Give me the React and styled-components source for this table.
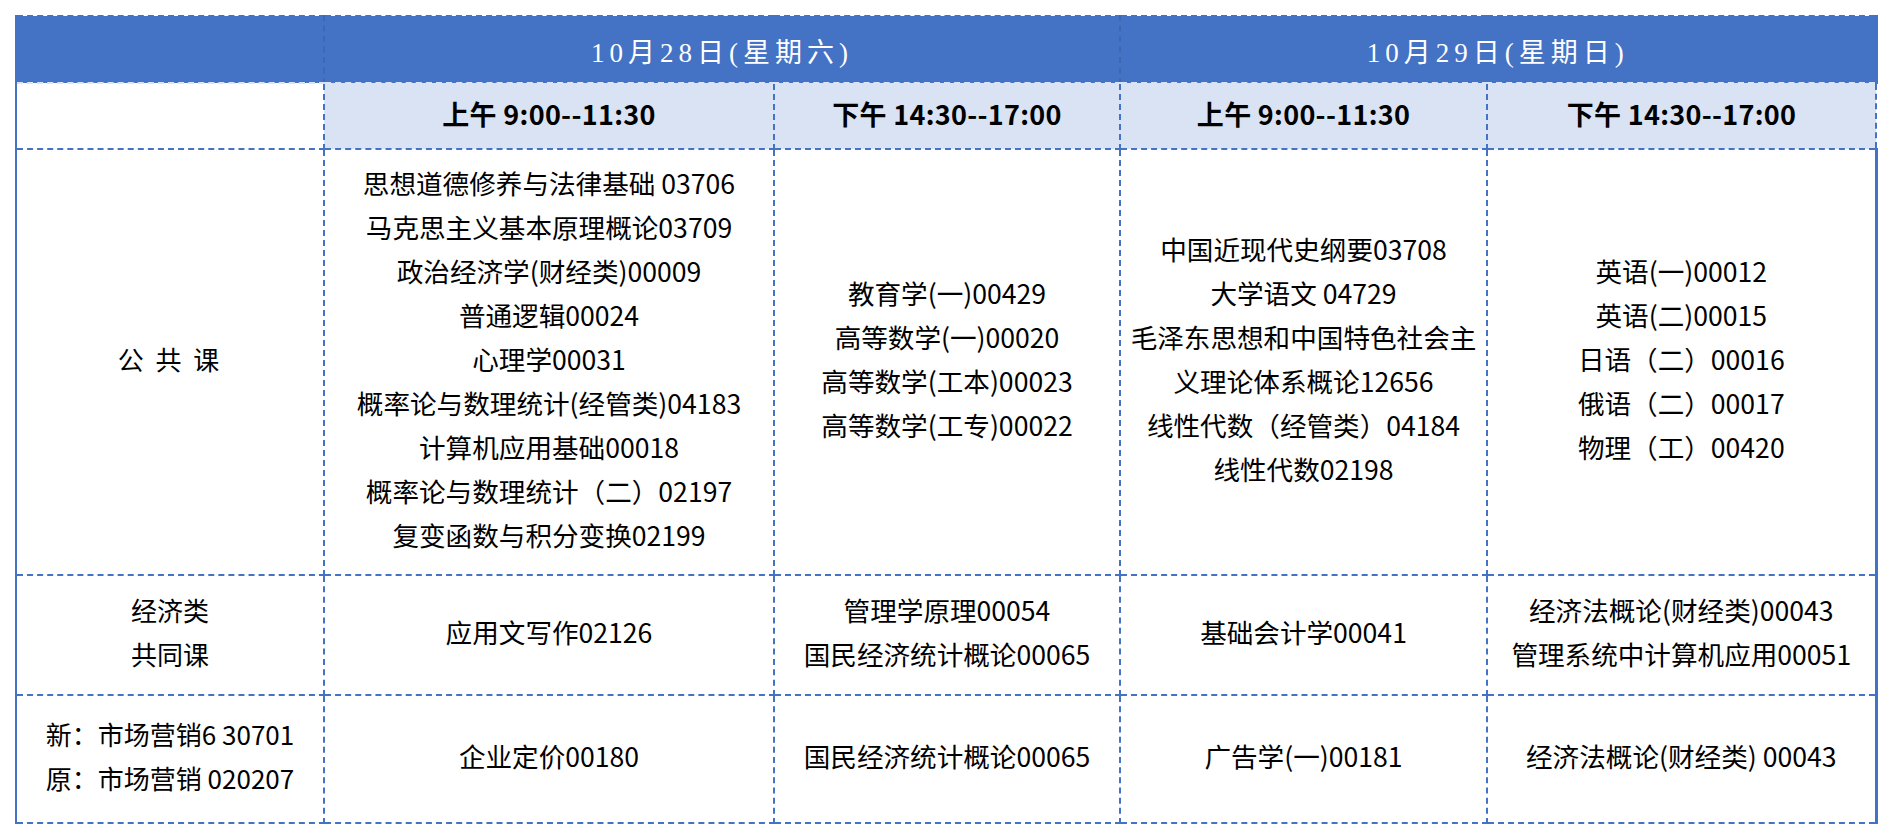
import React from "react";
import styled, { createGlobalStyle } from "styled-components";

const GlobalStyle = createGlobalStyle`
  body {
    margin: 0;
    background: #ffffff;
    font-family: "Noto Sans CJK SC", "Noto Sans", sans-serif;
  }
`;

const blue = "#4472c4";
const light = "#dae3f3";
const line = "2px dashed #4472c4";

const columns = [308, 450, 346, 367, 389];

const sessions = [
  "上午 9:00--11:30",
  "下午 14:30--17:00",
  "上午 9:00--11:30",
  "下午 14:30--17:00",
];

const rows = [
  {
    label: ["公 共 课"],
    spaced: true,
    height: 426,
    cells: [
      [
        "思想道德修养与法律基础 03706",
        "马克思主义基本原理概论03709",
        "政治经济学(财经类)00009",
        "普通逻辑00024",
        "心理学00031",
        "概率论与数理统计(经管类)04183",
        "计算机应用基础00018",
        "概率论与数理统计（二）02197",
        "复变函数与积分变换02199",
      ],
      ["教育学(一)00429", "高等数学(一)00020", "高等数学(工本)00023", "高等数学(工专)00022"],
      [
        "中国近现代史纲要03708",
        "大学语文 04729",
        "毛泽东思想和中国特色社会主",
        "义理论体系概论12656",
        "线性代数（经管类）04184",
        "线性代数02198",
      ],
      ["英语(一)00012", "英语(二)00015", "日语（二）00016", "俄语（二）00017", "物理（工）00420"],
    ],
  },
  {
    label: ["经济类", "共同课"],
    height: 120,
    cells: [
      ["应用文写作02126"],
      ["管理学原理00054", "国民经济统计概论00065"],
      ["基础会计学00041"],
      ["经济法概论(财经类)00043", "管理系统中计算机应用00051"],
    ],
  },
  {
    label: ["新：市场营销6 30701", "原：市场营销 020207"],
    height: 128,
    cells: [
      ["企业定价00180"],
      ["国民经济统计概论00065"],
      ["广告学(一)00181"],
      ["经济法概论(财经类) 00043"],
    ],
  },
];

export default function App() {
  return (
    <>
      <GlobalStyle />
      <Page>
        <Schedule>
          <colgroup>
            {columns.map((w, i) => (
              <col key={i} style={{ width: w }} />
            ))}
          </colgroup>
          <thead>
            <DateRow>
              <DateCell />
              <DateCell colSpan={2}>10月28日(星期六)</DateCell>
              <DateCell colSpan={2} $end>
                10月29日(星期日)
              </DateCell>
            </DateRow>
            <SessionRow>
              <SessionCell $blank />
              {sessions.map((s, i) => (
                <SessionCell key={i} $end={i === sessions.length - 1}>
                  {s}
                </SessionCell>
              ))}
            </SessionRow>
          </thead>
          <tbody>
            {rows.map((row, r) => (
              <BodyRow key={r} $height={row.height}>
                <LabelCell $spaced={row.spaced}>
                  {row.label.map((t) => (
                    <Line key={t}>{t}</Line>
                  ))}
                </LabelCell>
                {row.cells.map((lines, c) => (
                  <Cell key={c} $end={c === row.cells.length - 1}>
                    {lines.map((t) => (
                      <Line key={t}>{t}</Line>
                    ))}
                  </Cell>
                ))}
              </BodyRow>
            ))}
          </tbody>
        </Schedule>
      </Page>
    </>
  );
}

const Page = styled.div`
  padding: 15px 0 0 15px;
`;

const Schedule = styled.table`
  table-layout: fixed;
  border-collapse: collapse;
  width: 1860px;
`;

const DateRow = styled.tr`
  height: 67px;
`;

const DateCell = styled.th`
  background: ${blue};
  color: #ffffff;
  font-family: "Liberation Serif", "Noto Sans CJK SC", serif;
  font-weight: 400;
  font-size: 27px;
  letter-spacing: 5px;
  text-align: center;
  vertical-align: middle;
  padding: 2px 0 0;
  border-top: ${line};
  border-left: 2px dashed #3d66b3;
  border-right: ${(p) => (p.$end ? `3px solid ${blue}` : "2px dashed #3d66b3")};
  border-bottom: 2px dashed #dae3f3;

  &:first-child {
    border-left: 2px solid ${blue};
  }
`;

const SessionRow = styled.tr`
  height: 66px;
`;

const SessionCell = styled.th`
  background: ${(p) => (p.$blank ? "#ffffff" : light)};
  color: #000000;
  font-size: 27px;
  font-weight: 700;
  letter-spacing: 0.3px;
  text-align: center;
  vertical-align: middle;
  padding: 0 0 6px;
  border-left: ${(p) => (p.$blank ? `2px solid ${blue}` : line)};
  border-right: ${line};
  border-bottom: ${line};
`;

const BodyRow = styled.tr`
  height: ${(p) => p.$height}px;
`;

const Cell = styled.td`
  text-align: center;
  vertical-align: middle;
  padding: 0 0 7px;
  font-size: 26.6px;
  color: #000000;
  border-left: ${line};
  border-right: ${(p) => (p.$end ? `3px solid ${blue}` : line)};
  border-bottom: ${line};
`;

const LabelCell = styled(Cell)`
  border-left: 2px solid ${blue};
  font-size: 26px;
  letter-spacing: ${(p) => (p.$spaced ? "3px" : "0")};
`;

const Line = styled.div`
  line-height: 44px;
  white-space: nowrap;
`;
